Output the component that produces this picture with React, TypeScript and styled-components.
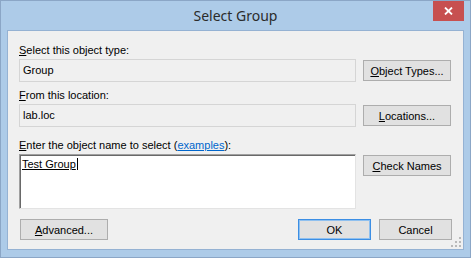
import { FC, ReactNode } from "react";
import styled, { createGlobalStyle } from "styled-components";

const GlobalStyle = createGlobalStyle`
  html, body {
    margin: 0;
    padding: 0;
    background: #ffffff;
  }
  body {
    font-family: "Liberation Sans", Arial, sans-serif;
  }
`;

const Window = styled.div`
  width: 471px;
  height: 258px;
  box-sizing: border-box;
  border: 1px solid #8ba6c6;
  background: #adcbe8;
  display: flex;
  flex-direction: column;
`;

const TitleBar = styled.div`
  position: relative;
  height: 29px;
  display: flex;
  align-items: center;
  justify-content: center;
  font-family: "Noto Sans", "Open Sans", sans-serif;
  font-size: 14px;
  color: #2b2b2b;
  padding-bottom: 1px;
  box-sizing: border-box;
`;

const CloseButton = styled.div`
  position: absolute;
  top: 0;
  right: 6px;
  width: 31px;
  height: 20px;
  background: #c75050;
  display: flex;
  align-items: center;
  justify-content: center;
`;

const Client = styled.div`
  flex: 1;
  margin: 0 6px 7px 6px;
  border: 1px solid #95b2d3;
  background: #f0f0f0;
  padding: 13px 11px 0 11px;
  position: relative;
  font-size: 11px;
  color: #000;
`;

const Form = styled.div`
  display: grid;
  grid-template-columns: 337px 88px;
  column-gap: 7px;
`;

const Label = styled.div<{ $top: number }>`
  grid-column: 1;
  height: 13px;
  line-height: 13px;
  margin-top: ${({ $top }) => $top}px;
  margin-bottom: 2px;
  white-space: nowrap;
`;

const ReadOnlyBox = styled.div`
  grid-column: 1;
  height: 23px;
  box-sizing: border-box;
  border: 1px solid #d5d5d5;
  background: #f0f0f0;
  padding: 0 3px;
  line-height: 21px;
`;

const NameArea = styled.div`
  grid-column: 1;
  height: 55px;
  box-sizing: border-box;
  border: 1px solid;
  border-color: #a0a0a0 #e3e3e3 #e3e3e3 #a0a0a0;
  box-shadow: inset 1px 1px 0 #696969;
  background: #ffffff;
  padding: 3px 2px;
  line-height: 13px;
`;

const ResolvedName = styled.span`
  text-decoration: underline;
  border-right: 1px solid #000;
  padding-right: 1px;
`;

const Button = styled.div<{ $default?: boolean; $width?: number }>`
  width: ${({ $width }) => ($width ? `${$width}px` : "100%")};
  height: 21px;
  box-sizing: border-box;
  border: 1px solid ${({ $default }) => ($default ? "#3c8ee4" : "#adadad")};
  box-shadow: ${({ $default }) =>
    $default ? "inset 0 0 0 1px #8fc0ef" : "none"};
  background: #e1e1e1;
  display: flex;
  align-items: center;
  justify-content: center;
  white-space: nowrap;
`;

const SideButton = styled(Button)`
  grid-column: 2;
  margin-top: 1px;
  align-self: start;
`;

const Link = styled.span`
  color: #0066cc;
  text-decoration: underline;
`;

const Footer = styled.div`
  display: flex;
  align-items: center;
  margin-top: 10px;
  padding-left: 1px;
  width: 432px;
  gap: 8px;
`;

const Spacer = styled.div`
  flex: 1;
`;

const Grip = styled.svg`
  position: absolute;
  right: 1px;
  bottom: 1px;
`;

const Key: FC<{ children: ReactNode }> = ({ children }) => <u>{children}</u>;

const App: FC = () => {
  return (
    <>
      <GlobalStyle />
      <Window>
        <TitleBar>
          Select Group
          <CloseButton>
            <svg width="9" height="8" viewBox="0 0 9 8">
              <path
                d="M1 0.5 L8 7.5 M8 0.5 L1 7.5"
                stroke="#ffffff"
                strokeWidth="1.8"
              />
            </svg>
          </CloseButton>
        </TitleBar>
        <Client>
          <Form>
            <Label $top={0}>
              <Key>S</Key>elect this object type:
            </Label>
            <ReadOnlyBox>Group</ReadOnlyBox>
            <SideButton>
              <Key>O</Key>bject Types...
            </SideButton>

            <Label $top={7}>
              <Key>F</Key>rom this location:
            </Label>
            <ReadOnlyBox>lab.loc</ReadOnlyBox>
            <SideButton>
              <Key>L</Key>ocations...
            </SideButton>

            <Label $top={12}>
              <Key>E</Key>nter the object name to select (
              <Link>examples</Link>):
            </Label>
            <NameArea>
              <ResolvedName>Test Group</ResolvedName>
            </NameArea>
            <SideButton>
              <Key>C</Key>heck Names
            </SideButton>
          </Form>
          <Footer>
            <Button $width={88}>
              <Key>A</Key>dvanced...
            </Button>
            <Spacer />
            <Button $default $width={73}>
              OK
            </Button>
            <Button $width={73}>Cancel</Button>
          </Footer>
          <Grip width="11" height="11" viewBox="0 0 11 11">
            <g fill="#b9b9b9">
              <rect x="8" y="0" width="2" height="2" />
              <rect x="4" y="4" width="2" height="2" />
              <rect x="8" y="4" width="2" height="2" />
              <rect x="0" y="8" width="2" height="2" />
              <rect x="4" y="8" width="2" height="2" />
              <rect x="8" y="8" width="2" height="2" />
            </g>
          </Grip>
        </Client>
      </Window>
    </>
  );
};

export default App;
